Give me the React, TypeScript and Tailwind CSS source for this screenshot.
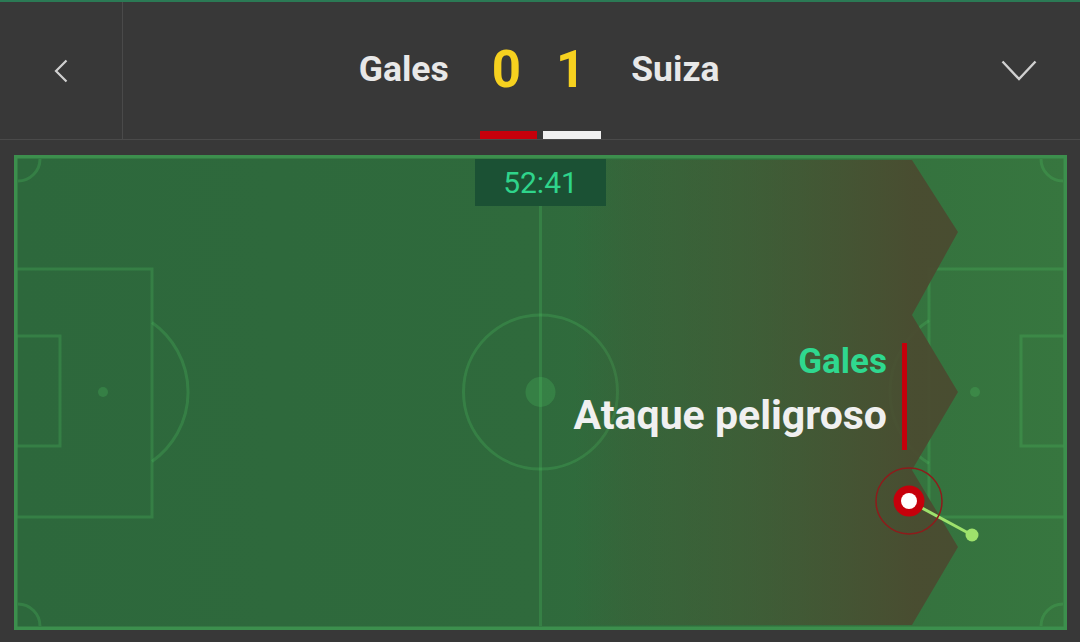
function Pitch() {
  const line = "#50c864";
  return (
    <svg width="1053" height="475" viewBox="0 0 1053 475" className="block">
      <defs>
        <linearGradient id="grass" x1="0" x2="1" y1="0" y2="0">
          <stop offset="0" stopColor="#2d683c" />
          <stop offset="0.5" stopColor="#2f6a3c" />
          <stop offset="1" stopColor="#37763f" />
        </linearGradient>
        <linearGradient id="attack" gradientUnits="userSpaceOnUse" x1="560" x2="900" y1="0" y2="0">
          <stop offset="0" stopColor="#4a4b30" stopOpacity="0" />
          <stop offset="0.15" stopColor="#4a4b30" stopOpacity="0.2" />
          <stop offset="0.55" stopColor="#4a4b30" stopOpacity="0.5" />
          <stop offset="1" stopColor="#4a4b30" stopOpacity="0.95" />
        </linearGradient>
      </defs>
      <rect x="0" y="0" width="1053" height="475" fill="url(#grass)" />
      <g fill="none" stroke={line} strokeOpacity="0.24" strokeWidth="3">
        <line x1="526.5" y1="4" x2="526.5" y2="471" />
        <circle cx="526.5" cy="237" r="77" />
        <rect x="2" y="114" width="136" height="248" />
        <rect x="2" y="181" width="44" height="110" />
        <path d="M138 167.5 A85 85 0 0 1 138 306.5" />
        <rect x="915" y="114" width="136" height="248" />
        <rect x="1007" y="181" width="44" height="110" />
        <path d="M915 165.5 A85 85 0 0 0 915 308.5" />
        <path d="M4 26 A22 22 0 0 0 26 4" />
        <path d="M1027 4 A22 22 0 0 0 1049 26" />
        <path d="M4 449 A22 22 0 0 1 26 471" />
        <path d="M1027 471 A22 22 0 0 1 1049 449" />
      </g>
      <g fill={line} fillOpacity="0.24">
        <circle cx="526.5" cy="237" r="15" />
        <circle cx="89" cy="237" r="5" />
        <circle cx="961" cy="237" r="5" />
      </g>
      <polygon
        points="560,5 898,5 944,77 898,160 944,237 898,315 944,392 898,470 560,470"
        fill="url(#attack)"
      />
      <rect x="1.5" y="1.5" width="1050" height="472" fill="none" stroke="#3c8f4d" strokeWidth="4" />
      <line x1="895" y1="346" x2="958" y2="380" stroke="#9ee26c" strokeWidth="3" />
      <circle cx="958" cy="380" r="6.5" fill="#9ee26c" />
      <circle cx="895" cy="346" r="33" fill="none" stroke="#8e1b1b" strokeWidth="1.5" />
      <circle cx="895" cy="346" r="15.5" fill="#c6000b" />
      <circle cx="895" cy="346" r="8" fill="#ffffff" />
    </svg>
  );
}

export default function App() {
  return (
    <div className="w-[1080px] h-[642px] bg-[#383838] overflow-hidden font-['Roboto',sans-serif]">
      <div className="h-[2px] bg-[#2b7a55]" />
      <div className="flex h-[138px] border-b border-[#4a4a4a]">
        <div className="w-[123px] border-r border-[#4a4a4a] flex items-center justify-center">
          <svg width="14" height="24" viewBox="0 0 14 24" className="-ml-[1px]">
            <polyline points="12.5,1.5 2,12 12.5,22.5" fill="none" stroke="#d0d0d0" strokeWidth="2.2" />
          </svg>
        </div>
        <div className="flex-1 relative flex items-center justify-center">
          <div className="flex items-center -mt-[2px]">
            <span className="text-[35.5px] font-bold text-[#e8e8e8] w-[92px] text-right">Gales</span>
            <span className="text-[51px] font-bold text-[#f6d11f] ml-[43px] leading-none">0</span>
            <span className="text-[51px] font-bold text-[#f6d11f] ml-[35px] leading-none">1</span>
            <span className="text-[35.5px] font-bold text-[#e8e8e8] ml-[46px] w-[92px]">Suiza</span>
          </div>
          <div className="absolute bottom-0 left-[357px] flex gap-[6px]">
            <div className="w-[57px] h-[8px] bg-[#c6000b]" />
            <div className="w-[58px] h-[8px] bg-[#f0f0f0]" />
          </div>
        </div>
        <div className="w-[123px] flex items-center justify-center">
          <svg width="36" height="22" viewBox="0 0 36 22" className="ml-[1px]">
            <polyline points="1.5,1.5 18,19 34.5,1.5" fill="none" stroke="#d0d0d0" strokeWidth="2.4" />
          </svg>
        </div>
      </div>
      <div className="relative ml-[14px] mt-[15px] w-[1053px] h-[475px]">
        <Pitch />
        <div className="absolute top-[4px] left-[461px] w-[131px] h-[47px] bg-[#1b5134] flex items-center justify-center text-[30px] text-[#2fd48b]">
          52:41
        </div>
        <div className="absolute top-[188px] right-[160px] flex items-stretch">
          <div className="flex flex-col items-end">
            <span className="text-[35px] font-bold text-[#2fd88f] leading-[36px] mt-[1px]">Gales</span>
            <span className="text-[41px] font-bold text-[#f0f0f0] leading-[48px] mt-[11px]">
              Ataque peligroso
            </span>
          </div>
          <div className="w-[5px] bg-[#c6000b] ml-[15px] h-[107px]" />
        </div>
      </div>
    </div>
  );
}
